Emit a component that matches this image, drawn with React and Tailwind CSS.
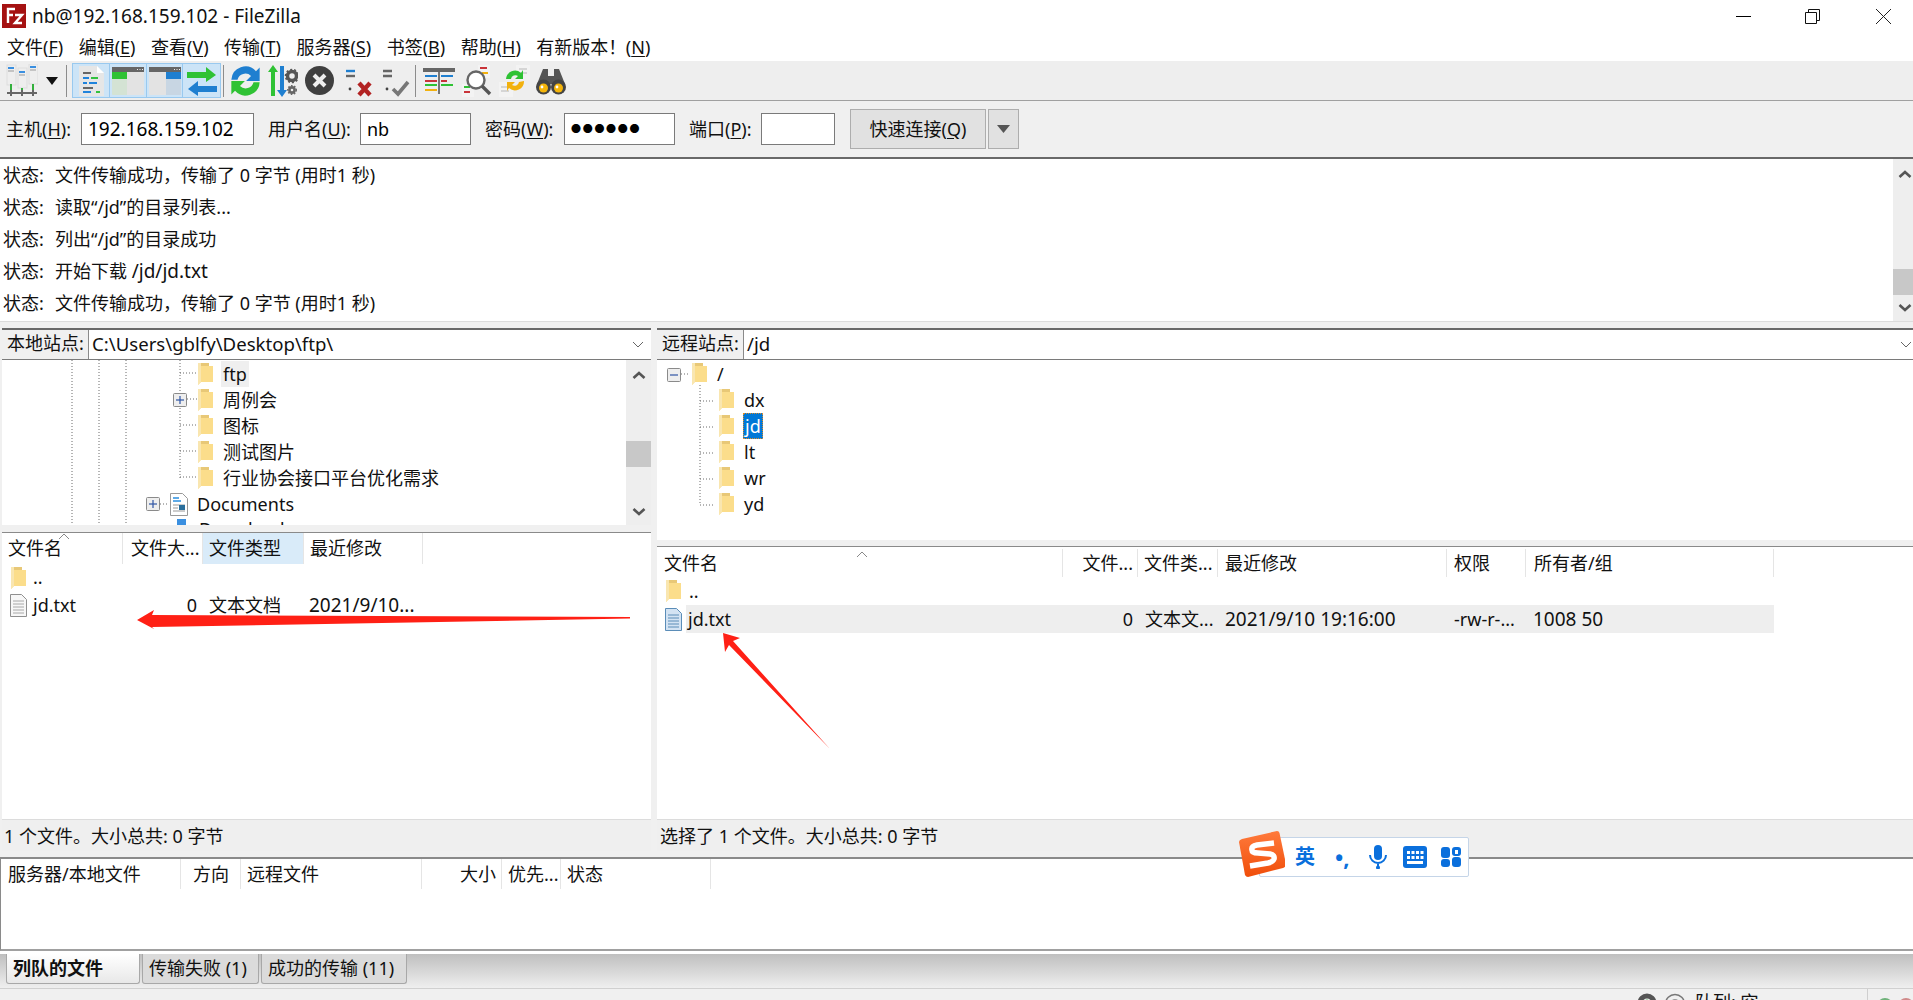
import React from 'react';

const Mn = ({ children }) => <span className="underline underline-offset-2">{children}</span>;

const Folder = ({ className = '' }) => (
    <svg className={`w-[15px] h-[22px] shrink-0 ${className}`} viewBox="0 0 15 22">
        <path d="M0 0h11v3h4v16H3l-3 3z" fill="#fbdd8b" />
        <path d="M3 0h8v3H3z" fill="#e8c877" />
        <path d="M0 0h3v19l-3 3z" fill="#f9e6b0" />
    </svg>
);

const Plus = ({ minus }) => (
    <svg className="w-[14px] h-[14px] shrink-0" viewBox="0 0 14 14">
        <rect x="0.5" y="0.5" width="13" height="13" rx="1" fill="#eee" stroke="#8a8a8a" />
        <path d="M3 7h8" stroke="#2f55a4" strokeWidth="1.2" />
        {!minus && <path d="M7 3v8" stroke="#2f55a4" strokeWidth="1.2" />}
    </svg>
);

const Chevron = ({ down, className = '' }) => (
    <svg className={`w-[14px] h-[10px] ${className}`} viewBox="0 0 14 10">
        <path d={down ? 'M1.5 2l5.5 5 5.5-5' : 'M1.5 8l5.5-5 5.5 5'} fill="none" stroke="#555" strokeWidth="2.6" />
    </svg>
);

const ScrollBar = ({ thumbTop, className = '' }) => (
    <div className={`bg-[#eeeeee] flex flex-col items-center shrink-0 relative ${className}`}>
        <Chevron className="mt-[10px]" />
        <div className="absolute left-0 right-0 h-[26px] bg-[#c8c8c8]" style={{ top: thumbTop }} />
        <Chevron down className="mt-auto mb-[8px]" />
    </div>
);

function ToolbarIcons() {
    return (
        <div className="flex items-center h-[39px] pl-[6px]">
            {/* site manager */}
            <svg className="w-[32px] h-[34px]" viewBox="0 0 32 34">
                <rect x="1" y="1" width="9" height="20" fill="#eee" stroke="#ddd" />
                <rect x="12" y="4" width="9" height="20" fill="#eee" stroke="#ddd" />
                <rect x="23" y="0" width="9" height="20" fill="#eee" stroke="#ddd" />
                <path d="M2 4h6M13 8h6M24 3h6" stroke="#3a8fe0" strokeWidth="2" />
                <path d="M2 7h6M13 11h6M24 6h6" stroke="#999" strokeWidth="1" />
                <path d="M5 20v6M16 24v4M27 20v6" stroke="#33b03d" strokeWidth="2" />
                <path d="M1 29h30M5 26v6M16 26v6M27 26v6" stroke="#666" strokeWidth="2" />
            </svg>
            <svg className="w-[12px] h-[8px] ml-[8px]" viewBox="0 0 12 8"><path d="M0 0h12L6 8z" fill="#111" /></svg>
            <div className="w-px h-[32px] bg-[#8c8c8c] ml-[8px] mr-[5px]" />
            <div className="flex h-[35px] border border-[#99c9ef] bg-[#cce4f7] divide-x divide-[#99c9ef]">
                <div className="w-[37px] flex items-center justify-center">
                    <svg className="w-[27px] h-[30px]" viewBox="0 0 27 30">
                        <path d="M1 0h18l7 7v23H1z" fill="#e6e6e6" />
                        <path d="M19 0l7 7h-7z" fill="#fff" />
                        <path d="M5 12h6M5 17h4M11 17h8M5 26h8" stroke="#1f83dc" strokeWidth="2" />
                        <path d="M5 7h8M5 22h10" stroke="#666" strokeWidth="2" />
                        <path d="M13 12h7M18 26h4" stroke="#33c23f" strokeWidth="2" />
                    </svg>
                </div>
                <div className="w-[37px] flex items-center justify-center">
                    <svg className="w-[32px] h-[28px]" viewBox="0 0 32 28">
                        <rect width="32" height="28" rx="1" fill="#d4e3d4" />
                        <rect x="15" y="5" width="17" height="23" fill="#e3e3e3" />
                        <rect width="32" height="5" fill="#666" />
                        <path d="M25 2.500h1M27.500 2.500h1M30 2.500h1" stroke="#eee" />
                        <rect y="5" width="15" height="7" fill="#2fc234" />
                    </svg>
                </div>
                <div className="w-[36px] flex items-center justify-center">
                    <svg className="w-[32px] h-[28px]" viewBox="0 0 32 28">
                        <rect width="32" height="28" rx="1" fill="#e3e3e3" />
                        <rect x="17" y="5" width="15" height="23" fill="#c8d6e3" />
                        <rect width="32" height="5" fill="#666" />
                        <path d="M25 2.500h1M27.500 2.500h1M30 2.500h1" stroke="#eee" />
                        <rect x="17" y="5" width="15" height="7" fill="#1f7fd0" />
                    </svg>
                </div>
                <div className="w-[37px] flex items-center justify-center">
                    <svg className="w-[30px] h-[30px]" viewBox="0 0 30 30">
                        <path d="M0 6h19V1l10 8-10 7v-4H0z" fill="#2fc234" />
                        <path d="M30 20H11v-5L1 23l10 7v-4h19z" fill="#1f7fd0" />
                    </svg>
                </div>
            </div>
            <div className="w-px h-[32px] bg-[#8c8c8c] ml-[2px] mr-[6px]" />
            {/* refresh */}
            <svg className="w-[31px] h-[32px]" viewBox="3 3 25 26">
                <path d="M4 15a11.500 11.500 0 0 1 20-7l3-3v11H16l4-4a6.500 6.500 0 0 0-11 3z" fill="#1f7fd0" />
                <path d="M27 17a11.500 11.500 0 0 1-20 7l-3 3V16h11l-4 4a6.500 6.500 0 0 0 11-3z" fill="#2fc234" />
            </svg>
            {/* process queue */}
            <svg className="w-[30px] h-[32px] ml-[7px]" viewBox="0 0 30 32">
                <path d="M5 0l5 7H7v24H3V7H0z" fill="#2fc234" />
                <path d="M14 32l-5-7h3V1h4v24h3z" fill="#1f7fd0" />
                <circle cx="24" cy="11" r="4.500" fill="none" stroke="#555" strokeWidth="3.500" />
                <circle cx="24" cy="11" r="6.500" fill="none" stroke="#555" strokeWidth="1.600" strokeDasharray="2 2" />
                <circle cx="24" cy="25" r="2.600" fill="none" stroke="#666" strokeWidth="2.600" />
                <circle cx="24" cy="25" r="4.400" fill="none" stroke="#666" strokeWidth="1.200" strokeDasharray="1.600 1.600" />
            </svg>
            {/* cancel */}
            <svg className="w-[29px] h-[29px] ml-[7px]" viewBox="0 0 29 29">
                <circle cx="14.500" cy="14.500" r="14.500" fill="#3f3f3f" />
                <path d="M9 9l11 11M20 9L9 20" stroke="#eee" strokeWidth="4" />
            </svg>
            {/* disconnect */}
            <svg className="w-[31px] h-[32px] ml-[8px]" viewBox="0 0 31 32">
                <path d="M0 0h15l3 3v24H0z" fill="#eee" />
                <path d="M4 6h9" stroke="#1f7fd0" strokeWidth="2.400" />
                <path d="M4 11h9" stroke="#666" strokeWidth="2.400" />
                <circle cx="8" cy="24" r="1.400" fill="#444" />
                <path d="M17 18l11 12M28 18L17 30" stroke="#b22222" strokeWidth="4.400" />
            </svg>
            {/* reconnect */}
            <svg className="w-[31px] h-[32px] ml-[6px]" viewBox="0 0 31 32">
                <path d="M0 0h15l3 3v24H0z" fill="#eee" />
                <path d="M4 6h9M4 11h9" stroke="#666" strokeWidth="2.400" />
                <circle cx="8" cy="24" r="1.400" fill="#444" />
                <path d="M14 24l5 5 10-12" fill="none" stroke="#777" strokeWidth="3.600" />
            </svg>
            <div className="w-px h-[32px] bg-[#8c8c8c] ml-[5px] mr-[7px]" />
            {/* directory listing filter */}
            <svg className="w-[32px] h-[28px]" viewBox="0 0 32 28">
                <rect y="1" width="32" height="26" fill="#eee" />
                <rect y="1" width="32" height="4" fill="#666" />
                <path d="M2 9h12M18 9h12" stroke="#1f7fd0" strokeWidth="2" />
                <path d="M2 14h12M18 14h6" stroke="#c9343a" strokeWidth="2" />
                <path d="M2 18h12M18 18h12" stroke="#2fc234" strokeWidth="2" />
                <path d="M2 23h12" stroke="#f2b10e" strokeWidth="2" />
                <path d="M16 5v22" stroke="#777" strokeWidth="2" />
            </svg>
            {/* compare */}
            <svg className="w-[30px] h-[32px] ml-[7px]" viewBox="0 0 30 32">
                <rect x="16" y="0" width="12" height="13" fill="#f3f3f3" />
                <rect x="0" y="19" width="12" height="13" fill="#f3f3f3" />
                <path d="M18 3h7" stroke="#c9343a" strokeWidth="2" />
                <path d="M20 8h6" stroke="#f2b10e" strokeWidth="2" />
                <path d="M2 22h6" stroke="#2fc234" strokeWidth="2" />
                <path d="M2 27h6" stroke="#c9343a" strokeWidth="2" />
                <circle cx="14" cy="15" r="8.500" fill="#fff" stroke="#666" strokeWidth="2.400" />
                <path d="M20 21l8 8" stroke="#555" strokeWidth="3.400" />
            </svg>
            {/* sync */}
            <svg className="w-[31px] h-[32px] ml-[7px]" viewBox="0 0 31 32">
                <rect x="17" y="0" width="14" height="15" fill="#f3f3f3" />
                <rect x="0" y="17" width="14" height="15" fill="#f3f3f3" />
                <path d="M2 22h8M2 26h8M20 4h8M20 8h8" stroke="#ccc" strokeWidth="1.600" />
                <path d="M7 14a9 9 0 0 1 15-6l2-3v9h-8l3-3a4.500 4.500 0 0 0-7 3z" fill="#2fc234" />
                <path d="M25 16a9 9 0 0 1-15 7l-2 3v-9h8l-3 3a4.500 4.500 0 0 0 7-3z" fill="#f2b10e" />
            </svg>
            {/* find */}
            <svg className="w-[30px] h-[30px] ml-[6px]" viewBox="0 0 30 30">
                <path d="M7 3h5v7h6V3h5l6 15H1z" fill="#555" />
                <circle cx="7.500" cy="21" r="7.500" fill="#444" />
                <circle cx="22.500" cy="21" r="7.500" fill="#444" />
                <circle cx="7.500" cy="22" r="4.500" fill="#f5b50a" />
                <circle cx="22.500" cy="22" r="4.500" fill="#f5b50a" />
                <circle cx="6" cy="21" r="1.400" fill="#fff" />
                <circle cx="21" cy="21" r="1.400" fill="#fff" />
            </svg>
        </div>
    );
}

const inputCls = 'h-[32px] bg-white border border-[#7a7a7a] px-[6px] flex items-center text-black overflow-hidden shrink-0';

function QuickConnect() {
    return (
        <div className="h-[56px] flex items-center pl-[6px] text-[18px] text-[#111]">
            <span className="w-[75px] whitespace-nowrap shrink-0">主机(<Mn>H</Mn>):</span>
            <div className={`${inputCls} w-[173px] text-[19px]`}>192.168.159.102</div>
            <span className="ml-[14px] w-[92px] whitespace-nowrap shrink-0">用户名(<Mn>U</Mn>):</span>
            <div className={`${inputCls} w-[111px] text-[18px]`}>nb</div>
            <span className="ml-[14px] w-[79px] whitespace-nowrap shrink-0">密码(<Mn>W</Mn>):</span>
            <div className={`${inputCls} w-[111px] text-[10px] tracking-[1.7px]`}>●●●●●●</div>
            <span className="ml-[14px] w-[72px] whitespace-nowrap shrink-0">端口(<Mn>P</Mn>):</span>
            <div className={`${inputCls} w-[74px]`} />
            <button className="ml-[15px] w-[136px] h-[40px] bg-[#e1e1e1] border border-[#adadad] text-[18px]">快速连接(<Mn>Q</Mn>)</button>
            <div className="ml-[2px] w-[31px] h-[40px] bg-[#e1e1e1] border border-[#adadad] flex items-center justify-center">
                <svg className="w-[13px] h-[8px]" viewBox="0 0 13 8"><path d="M0 0h13L6.500 8z" fill="#555" /></svg>
            </div>
        </div>
    );
}

const logs = [
    '文件传输成功，传输了 0 字节 (用时1 秒)',
    '读取“/jd”的目录列表...',
    '列出“/jd”的目录成功',
    <>开始下载 <span className="text-[19px]">/jd/jd.txt</span></>,
    '文件传输成功，传输了 0 字节 (用时1 秒)',
];

function LogPane() {
    return (
        <div className="h-[162px] bg-white flex">
            <div className="flex-1 pl-[3px]">
                {logs.map((t, i) => (
                    <div key={i} className="h-[32px] flex items-center text-[18px]">
                        <span className="w-[52px]">状态:</span>
                        <span>{t}</span>
                    </div>
                ))}
            </div>
            <ScrollBar thumbTop={110} className="w-[20px] pl-[4px]" />
        </div>
    );
}

function LocationBar({ label, path, chevronCls }) {
    return (
        <div className="h-[32px] flex border-t-2 border-[#696969] border-b border-b-[#7a7a7a] bg-white shrink-0">
            <div className="w-[87px] bg-[#f0f0f0] border-r border-[#8a8a8a] flex items-center pl-[5px] pb-[2px] text-[18px] whitespace-nowrap">{label}</div>
            <div className="flex-1 flex items-center pl-[3px] pb-[2px] text-[18.6px]">{path}</div>
            <svg className={`w-[12px] h-[7px] self-center ${chevronCls}`} viewBox="0 0 12 7"><path d="M1 1l5 5 5-5" fill="none" stroke="#666" /></svg>
        </div>
    );
}

const Dotted = ({ d }) => <path d={d} fill="none" stroke="#6b6b6b" strokeDasharray="1 2" />;

function LocalTree() {
    const rows = ['ftp', '周例会', '图标', '测试图片', '行业协会接口平台优化需求'];
    return (
        <div className="h-[165px] flex bg-white overflow-hidden shrink-0">
            <div className="flex-1 relative overflow-hidden pt-[1px]">
                <svg className="absolute left-0 top-0 w-[200px] h-[165px]" viewBox="0 0 200 165">
                    <Dotted d="M70 0v165M97 0v165M124 0v165M178 0v118M178 13h17M178 65h17M178 91h17M178 117h17M185 39h10M158 144h9" />
                </svg>
                <div className="absolute left-[171px] top-[33px]"><Plus /></div>
                <div className="absolute left-[144px] top-[137px]"><Plus /></div>
                <div className="pl-[196px]">
                    {rows.map((r, i) => (
                        <div key={r} className="h-[26px] flex items-center">
                            <Folder />
                            <span className={`ml-[8px] px-[2px] h-[26px] flex items-center text-[18px] ${i === 0 ? 'bg-[#efefef]' : ''}`}>{r}</span>
                        </div>
                    ))}
                </div>
                <div className="pl-[168px] h-[26px] flex items-center">
                    <svg className="w-[18px] h-[23px]" viewBox="0 0 18 23">
                        <path d="M.5.5h12l5 5v17H.5z" fill="#fff" stroke="#999" />
                        <path d="M3 5h6M3 8h8" stroke="#2a8fe0" strokeWidth="1.400" />
                        <path d="M3 12h12M3 15h5M3 18h12" stroke="#999" />
                        <rect x="9" y="12" width="6" height="5" fill="#2a6f9c" />
                    </svg>
                    <span className="ml-[9px] text-[18px] leading-[22px]">Documents</span>
                </div>
                <div className="pl-[175px] h-[26px] flex items-start pt-[2px]">
                    <div className="w-[9px] h-[8px] bg-[#3a8fe0]" />
                    <span className="ml-[13px] text-[18px] leading-[20px]">Downloads</span>
                </div>
            </div>
            <ScrollBar thumbTop={81} className="w-[25px]" />
        </div>
    );
}

function RemoteTree() {
    return (
        <div className="h-[180px] bg-white relative shrink-0 pt-[1px]">
            <svg className="absolute left-0 top-0 w-[70px] h-[160px]" viewBox="0 0 70 160">
                <Dotted d="M24 14h9M43 25v120M43 41h14M43 67h14M43 93h14M43 119h14M43 145h14" />
            </svg>
            <div className="absolute left-[10px] top-[8px]"><Plus minus /></div>
            <div className="h-[26px] flex items-center pl-[35px]">
                <Folder />
                <span className="ml-[10px] text-[18px]">/</span>
            </div>
            {['dx', 'jd', 'lt', 'wr', 'yd'].map((n) => (
                <div key={n} className="h-[26px] flex items-center pl-[62px]">
                    <Folder />
                    {n === 'jd' ? (
                        <span className="ml-[9px] px-[2px] h-[26px] flex items-center text-[18px] text-white bg-[#0078d7] outline-1 outline-dotted outline-offset-[-1px] outline-[#d98b2b]">{n}</span>
                    ) : (
                        <span className="ml-[10px] text-[18px]">{n}</span>
                    )}
                </div>
            ))}
        </div>
    );
}

function HeaderCell({ w, children, className = '', right }) {
    return (
        <div className={`h-full flex items-center border-r border-[#e5e5e5] text-[18px] whitespace-nowrap overflow-hidden shrink-0 ${right ? 'justify-end pr-[4px]' : 'pl-[6px]'} ${className}`} style={{ width: w }}>
            {children}
        </div>
    );
}

const TxtIcon = ({ blue }) => (
    <svg className="w-[17px] h-[23px] shrink-0" viewBox="0 0 17 23">
        <path d="M.5.5h11l5 5v17H.5z" fill={blue ? '#d3e3f3' : '#f7f7f7'} stroke={blue ? '#5b8db8' : '#8f8f8f'} />
        <path d="M3 7h11M3 10h11M3 13h11M3 16h11M3 19h11" stroke={blue ? '#5b8db8' : '#a8a8a8'} />
    </svg>
);

function LocalList() {
    return (
        <div className="flex-1 bg-white relative border-t border-[#8a8a8a] min-h-0">
            <div className="h-[31px] flex">
                <HeaderCell w={121}>文件名</HeaderCell>
                <HeaderCell w={80} className="pl-[8px]">文件大...</HeaderCell>
                <HeaderCell w={101} className="bg-[#d9ebf9] pl-[5px]">文件类型</HeaderCell>
                <HeaderCell w={119} className="pl-[4px]">最近修改</HeaderCell>
            </div>
            <svg className="absolute left-[56px] top-0 w-[12px] h-[7px]" viewBox="0 0 12 7"><path d="M1 6l5-5 5 5" fill="none" stroke="#888" /></svg>
            <div className="h-[27px] flex items-center pl-[9px]">
                <Folder />
                <span className="ml-[7px] text-[18px]">..</span>
            </div>
            <div className="h-[28px] flex items-center pl-[8px] text-[18px]">
                <TxtIcon />
                <span className="ml-[6px] w-[76px]">jd.txt</span>
                <span className="w-[89px] text-right pr-[1px]">0</span>
                <span className="ml-[11px] w-[100px]">文本文档</span>
                <span className="text-[19px]">2021/9/10...</span>
            </div>
        </div>
    );
}

function RemoteList() {
    return (
        <div className="flex-1 bg-white relative border-t border-[#8a8a8a] min-h-0">
            <div className="h-[30px] flex pt-[2px]">
                <HeaderCell w={406} className="pl-[7px]">文件名</HeaderCell>
                <HeaderCell w={75} right>文件...</HeaderCell>
                <HeaderCell w={80}>文件类...</HeaderCell>
                <HeaderCell w={229} className="pl-[7px]">最近修改</HeaderCell>
                <HeaderCell w={79} className="pl-[7px]">权限</HeaderCell>
                <HeaderCell w={248} className="pl-[8px]">所有者/组</HeaderCell>
            </div>
            <svg className="absolute left-[199px] top-[4px] w-[12px] h-[7px]" viewBox="0 0 12 7"><path d="M1 6l5-5 5 5" fill="none" stroke="#888" /></svg>
            <div className="h-[28px] flex items-center pl-[9px]">
                <Folder />
                <span className="ml-[8px] text-[18px]">..</span>
            </div>
            <div className="h-[28px] flex items-center pl-[8px] text-[18px]">
                <TxtIcon blue />
                <div className="ml-[4px] w-[1088px] h-full bg-[#eeeeee] flex items-center">
                    <span className="pl-[2px] w-[100px]">jd.txt</span>
                    <span className="w-[347px] text-right">0</span>
                    <span className="ml-[12px] w-[80px]">文本文...</span>
                    <span className="w-[229px] text-[19px]">2021/9/10 19:16:00</span>
                    <span className="w-[79px]">-rw-r-...</span>
                    <span className="text-[19px]">1008 50</span>
                </div>
            </div>
        </div>
    );
}

function Queue() {
    return (
        <div className="h-[94px] bg-white border-t-2 border-[#8a8a8a] border-b-2 border-b-[#a0a0a0] border-l border-l-[#8a8a8a] shrink-0">
            <div className="h-[30px] flex">
                <HeaderCell w={180} className="pl-[7px]">服务器/本地文件</HeaderCell>
                <HeaderCell w={60} right className="pr-[11px]">方向</HeaderCell>
                <HeaderCell w={181}>远程文件</HeaderCell>
                <HeaderCell w={80} right className="pr-[5px]">大小</HeaderCell>
                <HeaderCell w={59}>优先...</HeaderCell>
                <HeaderCell w={150}>状态</HeaderCell>
            </div>
        </div>
    );
}

function Tabs() {
    return (
        <div className="h-[38px] bg-gradient-to-b from-[#bfbfbf] to-[#efefef] border-t-[3px] border-white border-b border-b-[#d0d0d0] flex items-start pl-[6px] gap-[2px] shrink-0">
            <div className="w-[134px] h-[30px] rounded-b-[3px] border border-t-0 border-[#a8a8a8] bg-gradient-to-b from-[#ffffff] to-[#e8e8e8] pl-[6px] flex items-center text-[18px] font-bold">列队的文件</div>
            <div className="w-[117px] h-[30px] rounded-b-[3px] border border-t-0 border-[#a8a8a8] bg-[#dbdbdb] pl-[6px] flex items-center text-[18px]">传输失败 (1)</div>
            <div className="w-[146px] h-[30px] rounded-b-[3px] border border-t-0 border-[#a8a8a8] bg-[#dbdbdb] pl-[6px] flex items-center text-[18px]">成功的传输 (11)</div>
        </div>
    );
}

function BottomStatus() {
    return (
        <div className="flex-1 bg-[#f0f0f0] flex justify-end items-start overflow-hidden">
            <svg className="w-[20px] h-[20px] mt-[4px]" viewBox="0 0 20 20">
                <circle cx="10" cy="10" r="7" fill="none" stroke="#555" strokeWidth="5" />
                <circle cx="10" cy="9" r="2.400" fill="#3fb24a" />
            </svg>
            <svg className="w-[22px] h-[22px] mt-[4px] ml-[7px]" viewBox="0 0 22 22">
                <circle cx="11" cy="11" r="9.500" fill="none" stroke="#777" strokeWidth="1.500" />
                <circle cx="11" cy="11" r="5" fill="#999" />
            </svg>
            <span className="ml-[9px] w-[172px] text-[18px] leading-[22px] mt-[2px]">队列: 空</span>
            <div className="w-px h-full bg-[#cfcfcf]" />
            <div className="w-[16px] h-[16px] rounded-full bg-[#6fb27a] mt-[9px] ml-[9px]" />
            <div className="w-[16px] h-[16px] rounded-full bg-[#d08a8a] mt-[9px] ml-[5px] -mr-[1px]" />
        </div>
    );
}

function SogouBar() {
    return (
        <div className="absolute left-[1239px] top-[831px] w-[230px] h-[46px]">
            <div className="absolute left-[20px] top-[6px] right-0 bottom-0 bg-white border border-[#c5d5e8] rounded-[2px] flex items-center text-[#0a6fdc]">
                <span className="ml-[35px] w-[22px] text-[20px] font-bold leading-none">英</span>
                <span className="ml-[18px] w-[18px] text-[22px] font-bold leading-none">•,</span>
                <svg className="ml-[16px] w-[18px] h-[24px]" viewBox="0 0 18 24" fill="none" stroke="#0a6fdc" strokeWidth="2">
                    <rect x="5" y="0" width="8" height="15" rx="4" fill="#0a6fdc" stroke="none" />
                    <path d="M1 10a8 8 0 0 0 16 0M9 18v3" />
                    <circle cx="9" cy="22.500" r="1" fill="#0a6fdc" />
                </svg>
                <svg className="ml-[16px] w-[24px] h-[22px]" viewBox="0 0 24 22">
                    <rect width="24" height="22" rx="3" fill="#0a6fdc" />
                    <path d="M4 5h3v3H4zM8.500 5h3v3h-3zM13 5h3v3h-3zM17.500 5h3v3h-3zM4 10h3v3H4zM8.500 10h3v3h-3zM13 10h3v3h-3zM17.500 10h3v3h-3zM4 15h16v3H4z" fill="#fff" />
                </svg>
                <svg className="ml-[14px] w-[20px] h-[20px]" viewBox="0 0 20 20">
                    <rect width="9" height="11" rx="3" fill="#0a6fdc" />
                    <rect x="11" width="9" height="9" rx="3" fill="#0a6fdc" />
                    <rect y="12" width="9" height="8" rx="3" fill="#0a6fdc" />
                    <rect x="11" y="10" width="9" height="10" rx="3" fill="#0a6fdc" />
                    <rect x="14" y="3" width="3" height="4" fill="#fff" />
                </svg>
            </div>
            <svg className="absolute left-0 top-0 w-[46px] h-[46px]" viewBox="0 0 46 46">
                <defs>
                    <linearGradient id="sg" x1="0" y1="0" x2="0" y2="1">
                        <stop offset="0" stopColor="#ff7a3c" />
                        <stop offset="1" stopColor="#f04e0a" />
                    </linearGradient>
                </defs>
                <path d="M3 8L38 0q2 0 2.500 2L47 33q0 3-3 4L9 46q-2 0-3-2L0 11q0-2 3-3z" fill="url(#sg)" />
                <path d="M35 12L18 14q-6 1-5 5 0 3 6 3l12 1q5 1 4 5-1 3-6 4L11 35" fill="none" stroke="#fff" strokeWidth="5.500" />
            </svg>
        </div>
    );
}

// annotation arrows drawn over the file lists
function RedArrows() {
    return (
        <svg className="absolute left-0 top-0 w-[1000px] h-[800px] pointer-events-none" viewBox="0 0 1000 800">
            <path d="M137 620L154 610 152 615 630 617 630 618.500 152 627 154 629z" fill="#ff2015" />
            <path d="M723 633L740 638 733 641 830 749 729 645 725 652z" fill="#ff2015" />
        </svg>
    );
}

export default function App() {
    return (
        <div className="relative w-[1913px] h-[1000px] overflow-hidden flex flex-col bg-[#f0f0f0] text-[#111] font-['Noto_Sans','Noto_Sans_CJK_SC',sans-serif]">
            <div className="h-[32px] bg-white flex items-center shrink-0">
                <svg className="w-[24px] h-[24px] ml-[2px]" viewBox="0 0 24 24">
                    <rect width="24" height="24" fill="#a51212" />
                    <path d="M6 19V5h7M6 11h5M13 11h7l-7 8h7" fill="none" stroke="#fff" strokeWidth="2.400" />
                </svg>
                <span className="ml-[6px] text-[19px]">nb@192.168.159.102 - FileZilla</span>
                <div className="ml-auto flex items-center">
                    <div className="w-[15px] h-px bg-black mr-[54px]" />
                    <svg className="w-[15px] h-[15px] mr-[56px]" viewBox="0 0 15 15">
                        <path d="M.5 3.500h11v11H.5zM3.500 3.500V.5h11v11h-3" fill="none" stroke="#111" />
                    </svg>
                    <svg className="w-[15px] h-[15px] mr-[22px]" viewBox="0 0 15 15">
                        <path d="M0 0l15 15M15 0L0 15" stroke="#222" />
                    </svg>
                </div>
            </div>
            <div className="h-[29px] bg-white flex items-center pl-[7px] pt-[2px] gap-[15.5px] text-[18px] shrink-0">
                <span>文件(<Mn>F</Mn>)</span>
                <span>编辑(<Mn>E</Mn>)</span>
                <span>查看(<Mn>V</Mn>)</span>
                <span>传输(<Mn>T</Mn>)</span>
                <span>服务器(<Mn>S</Mn>)</span>
                <span>书签(<Mn>B</Mn>)</span>
                <span>帮助(<Mn>H</Mn>)</span>
                <span>有新版本！</span>
                <span className="-ml-[16px]">(<Mn>N</Mn>)</span>
            </div>
            <div className="h-[40px] bg-[#eeeeee] border-b border-[#a0a0a0] shrink-0"><ToolbarIcons /></div>
            <div className="border-b-2 border-[#696969] shrink-0"><QuickConnect /></div>
            <LogPane />
            <div className="h-[7px] bg-[#f0f0f0] border-t border-[#dcdcdc] shrink-0" />
            <div className="h-[523px] flex shrink-0">
                <div className="w-[652px] flex flex-col pl-[2px] pr-[1px] shrink-0">
                    <LocationBar label="本地站点:" path={'C:\\Users\\gblfy\\Desktop\\ftp\\'} chevronCls="mr-[7px]" />
                    <LocalTree />
                    <div className="h-[7px] bg-[#f0f0f0] shrink-0" />
                    <LocalList />
                    <div className="h-[32px] bg-[#efefef] border-t border-[#dcdcdc] flex items-center pl-[2px] pt-[1px] text-[18px] shrink-0">1 个文件。大小总共: 0 字节</div>
                </div>
                <div className="flex-1 flex flex-col pl-[5px] min-w-0">
                    <LocationBar label="远程站点:" path="/jd" chevronCls="mr-[1px]" />
                    <RemoteTree />
                    <div className="h-[6px] bg-[#f0f0f0] shrink-0" />
                    <RemoteList />
                    <div className="h-[32px] bg-[#efefef] border-t border-[#dcdcdc] flex items-center pl-[3px] pt-[1px] text-[18px] shrink-0">选择了 1 个文件。大小总共: 0 字节</div>
                </div>
            </div>
            <div className="h-[6px] shrink-0" />
            <Queue />
            <Tabs />
            <BottomStatus />
            <RedArrows />
            <SogouBar />
        </div>
    );
}
